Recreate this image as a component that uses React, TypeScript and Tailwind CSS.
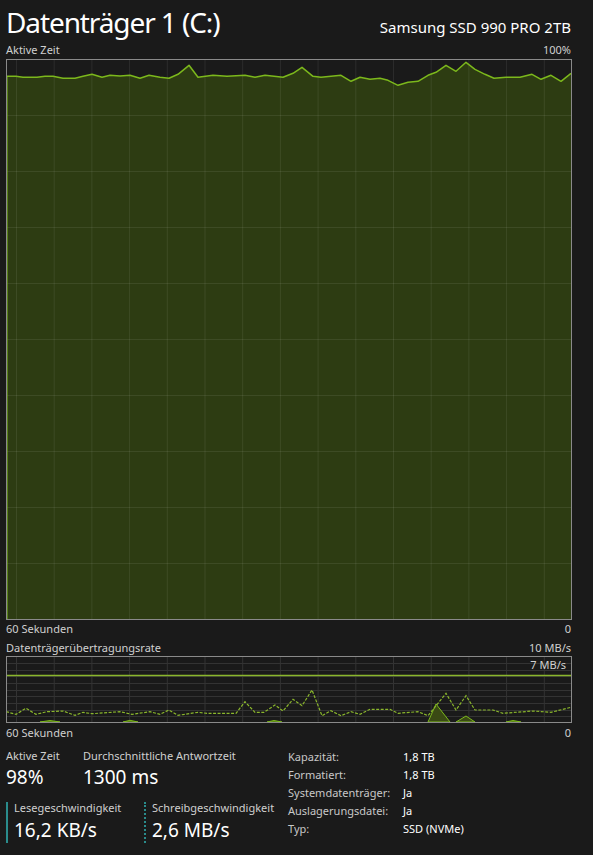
const W = 565;
const H1 = 560;
const H2 = 66;

// points taken in page coords, shifted into chart coords
const activePts: [number, number][] = [
  [6, 76.3], [16, 76.3], [23, 77.3], [37, 77.3], [45, 76.3], [53, 76.3], [63, 78.3], [75, 78.3],
  [83, 76.3], [92, 74.3], [102, 77.3], [110, 75.3], [120, 76], [130, 75.3], [140, 78.3], [149, 75.3],
  [160, 77.3], [169, 78.3], [178, 74.3], [189, 65.3], [198, 77.3], [213, 75.3], [227, 76.3], [245, 75.3],
  [255, 77.3], [265, 75.3], [283, 77.3], [293, 73.3], [302, 67.3], [313, 76.3], [321, 77.3], [341, 75.3],
  [351, 81.3], [360, 77.3], [370, 79.3], [380, 78.3], [388, 80.3], [398, 85.3], [408, 82.3], [418, 81.3],
  [428, 75.3], [436, 72.3], [446, 65.3], [456, 71.3], [466, 62.3], [475, 69.3], [485, 74.3], [494, 78.3],
  [506, 77.3], [520, 77.3], [532, 74.3], [541, 79.3], [551, 75.3], [561, 81.3], [571, 73.3],
];

const writePts: [number, number][] = [
  [6, 711.7], [16, 714.3], [26, 708.3], [36, 714.3], [47, 711.7], [63, 711], [75, 715.3], [83, 712.3],
  [92, 713.7], [120, 711.7], [132, 714.3], [150, 711.7], [160, 714.3], [169, 710], [178, 715.3],
  [198, 712.3], [207, 713.3], [236, 713.3], [245, 701.7], [255, 712.3], [264, 712.3], [275, 705],
  [283, 711], [293, 699.3], [302, 705.7], [312, 690], [322, 715.7], [331, 710.7], [341, 715.7],
  [351, 711.7], [360, 714.3], [370, 709.3], [390, 709.3], [398, 713.3], [418, 711.7], [428, 715.7],
  [436, 705.7], [446, 693.3], [456, 710], [466, 695.7], [475, 710], [493, 710], [503, 713.3],
  [533, 711], [551, 712.3], [571, 707.3],
];

const readBumps: [number, number][][] = [
  [[40, 722], [50, 720.5], [60, 722]],
  [[123, 722], [130, 720.3], [138, 722]],
  [[267, 722], [274, 720.5], [282, 722]],
  [[428, 722], [436, 704], [450, 722]],
  [[456, 722], [466, 716], [475, 722]],
  [[506, 722], [513, 720.5], [521, 722]],
];

const toPath = (pts: [number, number][], ox: number, oy: number) =>
  pts.map(([x, y], i) => `${i ? "L" : "M"}${(x - ox).toFixed(1)} ${(y - oy).toFixed(1)}`).join(" ");

const cols = Array.from({ length: 15 }, (_, i) => 10 + i * 37.7);

function ActiveChart() {
  const line = toPath(activePts, 6, 59);
  const area = `M0 ${H1} ` + line.replace(/^M/, "L") + ` L${W} ${H1} Z`;
  return (
    <svg width={W + 1} height={H1 + 1} className="block">
      <rect x={0} y={0} width={W + 1} height={H1 + 1} fill="#1a1a1a" />
      <path d={area} fill="#2d3c12" />
      {cols.map((x) => (
        <line key={x} x1={x + 0.5} y1={0} x2={x + 0.5} y2={H1} stroke="rgba(255,255,255,0.08)" />
      ))}
      {Array.from({ length: 9 }, (_, i) => 56 * (i + 1)).map((y) => (
        <line key={y} x1={0} y1={y + 0.5} x2={W} y2={y + 0.5} stroke="rgba(255,255,255,0.08)" />
      ))}
      <path d={`M0.8 ${H1} L0.8 ${(76.3 - 59).toFixed(1)} ` + line.replace(/^M/, "L")} fill="none" stroke="#7cb81c" strokeWidth={1.5} strokeLinejoin="round" />
      <rect x={0.5} y={0.5} width={W} height={H1} fill="none" stroke="#8a8a8a" />
    </svg>
  );
}

function TransferChart() {
  return (
    <svg width={W + 1} height={H2 + 1} className="block">
      <rect x={0} y={0} width={W + 1} height={H2 + 1} fill="#1a1a1a" />
      {cols.map((x) => (
        <line key={x} x1={x + 0.5} y1={0} x2={x + 0.5} y2={H2} stroke="#333333" />
      ))}
      {Array.from({ length: 9 }, (_, i) => 6.6 * (i + 1) + 0.7).map((y) => (
        <line key={y} x1={0} y1={Math.round(y) + 0.5} x2={W} y2={Math.round(y) + 0.5} stroke="#333333" />
      ))}
      {readBumps.map((b, i) => (
        <path key={i} d={toPath(b, 6, 656) + " Z"} fill="#3a4a14" stroke="#7cb81c" strokeWidth={1} />
      ))}
      <line x1={0} y1={19.5} x2={W} y2={19.5} stroke="#8ab62c" strokeWidth={1.5} />
      <path d={toPath(writePts, 6, 656)} fill="none" stroke="#8ab62c" strokeWidth={1.2} strokeDasharray="3 1.5" />
      <rect x={0.5} y={0.5} width={W} height={H2} fill="none" stroke="#8a8a8a" />
    </svg>
  );
}

const info = [
  ["Kapazität:", "1,8 TB"],
  ["Formatiert:", "1,8 TB"],
  ["Systemdatenträger:", "Ja"],
  ["Auslagerungsdatei:", "Ja"],
  ["Typ:", "SSD (NVMe)"],
];

export default function App() {
  return (
    <div className="w-[593px] h-[855px] bg-[#1a1a1a] pl-[6px] pr-[22px] text-[#d0d0d0] font-['Noto_Sans',sans-serif] overflow-hidden">
      <div className="flex justify-between items-baseline h-[44px]">
        <span className="text-[28px] leading-[44px] text-white tracking-[-1.1px]">Datenträger 1 (C:)</span>
        <span className="text-[15px] text-white">Samsung SSD 990 PRO 2TB</span>
      </div>
      <div className="flex justify-between text-[11px] leading-[11px] h-[15px]">
        <span>Aktive Zeit</span>
        <span>100%</span>
      </div>
      <ActiveChart />
      <div className="flex justify-between text-[11px] leading-[18px] h-[18px]">
        <span>60 Sekunden</span>
        <span>0</span>
      </div>
      <div className="flex justify-between text-[11px] leading-[19px] h-[18px]">
        <span>Datenträgerübertragungsrate</span>
        <span>10 MB/s</span>
      </div>
      <div className="relative">
        <TransferChart />
        <span className="absolute right-[5px] top-[2px] text-[11px] leading-[14px] text-[#d0d0d0]">7 MB/s</span>
      </div>
      <div className="flex justify-between text-[11px] leading-[20px] h-[20px]">
        <span>60 Sekunden</span>
        <span>0</span>
      </div>
      <div className="flex mt-[5px]">
        <div className="w-[282px] flex flex-col">
          <div className="flex">
            <div className="w-[77px] flex flex-col">
              <span className="text-[11px] leading-[15px]">Aktive Zeit</span>
              <span className="text-[19px] leading-[27px] text-white mt-[1px]">98%</span>
            </div>
            <div className="flex flex-col">
              <span className="text-[11px] leading-[15px]">Durchschnittliche Antwortzeit</span>
              <span className="text-[19px] leading-[27px] text-white mt-[1px]">1300 ms</span>
            </div>
          </div>
          <div className="flex mt-[11px]">
            <div className="w-[138px] border-l-2 border-[#2a8c8c] pl-[6px] h-[41px] flex flex-col">
              <span className="text-[11px] leading-[12px]">Lesegeschwindigkeit</span>
              <span className="text-[19px] leading-[24px] text-white mt-[4px]">16,2 KB/s</span>
            </div>
            <div className="border-l-2 border-dotted border-[#2a8c8c] pl-[6px] h-[41px] flex flex-col">
              <span className="text-[11px] leading-[12px]">Schreibgeschwindigkeit</span>
              <span className="text-[19px] leading-[24px] text-white mt-[4px]">2,6 MB/s</span>
            </div>
          </div>
        </div>
        <div className="flex flex-col text-[11px] leading-[18px]">
          {info.map(([k, v]) => (
            <div key={k} className="flex">
              <span className="w-[115px] text-[#c8c8c8]">{k}</span>
              <span className="text-white">{v}</span>
            </div>
          ))}
        </div>
      </div>
    </div>
  );
}
